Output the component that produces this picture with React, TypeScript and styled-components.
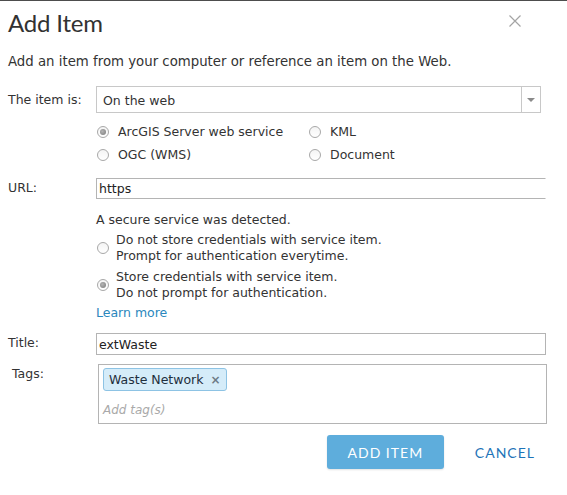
import styled, { createGlobalStyle } from 'styled-components';

const GlobalStyle = createGlobalStyle`
	html, body {
		margin: 0;
		padding: 0;
		background: #fff;
	}
`;

const Dialog = styled.div`
	width: 567px;
	height: 495px;
	box-sizing: border-box;
	border-top: 1px solid #4d4d4d;
	background: #fff;
	font-family: 'DejaVu Sans', Verdana, sans-serif;
	font-size: 12.5px;
	color: #333;
`;

const Header = styled.div`
	display: flex;
	justify-content: space-between;
	align-items: flex-start;
	padding: 7px 45px 0 8px;
`;

const Title = styled.h1`
	margin: 0;
	font-family: Lato, 'Open Sans', sans-serif;
	font-weight: 400;
	font-size: 24px;
	line-height: 30px;
	letter-spacing: -0.2px;
	color: #323232;
`;

const CloseButton = styled.button`
	border: none;
	background: none;
	padding: 0;
	margin-top: 6px;
	width: 14px;
	height: 14px;
	color: #a4a4a4;
	cursor: pointer;
	display: flex;
`;

const Intro = styled.p`
	margin: 16px 0 0 8px;
	font-size: 13.3px;
	line-height: 16px;
`;

const Form = styled.div`
	padding-left: 8px;
`;

type RowProps = {
	top: number;
};
const Row = styled.div<RowProps>`
	display: grid;
	grid-template-columns: 88px 1fr;
	margin-top: ${(props) => props.top}px;
`;

type LabelProps = {
	center?: boolean;
	indent?: number;
};
const Label = styled.label<LabelProps>`
	align-self: ${(props) => (props.center ? 'center' : 'start')};
	padding-left: ${(props) => props.indent || 0}px;
	padding-top: ${(props) => (props.center ? 0 : 2)}px;
	line-height: 16px;
`;

const SelectBox = styled.div`
	display: flex;
	width: 445px;
	height: 27px;
	box-sizing: border-box;
	border: 1px solid #c8c8c8;
`;

const SelectValue = styled.span`
	flex: 1;
	padding-left: 6px;
	line-height: 27px;
`;

const SelectArrow = styled.span`
	width: 18px;
	border-left: 1px solid #c8c8c8;
	display: flex;
	align-items: center;
	justify-content: center;
`;

const Arrow = styled.span`
	width: 0;
	height: 0;
	border-left: 4px solid transparent;
	border-right: 4px solid transparent;
	border-top: 4px solid #8a8a8a;
`;

const Content = styled.div`
	grid-column: 2;
`;

const RadioGrid = styled.div`
	display: grid;
	grid-template-columns: 212px 212px;
	grid-auto-rows: 23px;
	margin-top: 7px;
`;

type OptionProps = {
	gap: number;
};
const Option = styled.label<OptionProps>`
	display: flex;
	align-items: center;
	gap: ${(props) => props.gap}px;
	padding-left: 1px;
`;

type RadioProps = {
	checked?: boolean;
};
const Radio = styled.span<RadioProps>`
	position: relative;
	flex: none;
	width: 12px;
	height: 12px;
	box-sizing: border-box;
	border-radius: 50%;
	border: 1px solid #a8a8a8;
	background: linear-gradient(#f4f4f4, #fff);

	&::after {
		content: '';
		display: ${(props) => (props.checked ? 'block' : 'none')};
		position: absolute;
		top: 2px;
		left: 2px;
		width: 6px;
		height: 6px;
		border-radius: 50%;
		background: radial-gradient(circle at 40% 40%, #b4b4b4, #7a7a7a);
	}
`;

type InputProps = {
	h: number;
	w: number;
};
const TextInput = styled.div<InputProps>`
	width: ${(props) => props.w}px;
	height: ${(props) => props.h}px;
	box-sizing: border-box;
	border: 1px solid #b4b4b4;
	padding-left: 2px;
	line-height: ${(props) => props.h - 1}px;
	color: #222;
`;

const UrlInput = styled(TextInput)`
	border-right-color: transparent;
`;

type NoteProps = {
	top: number;
};
const Note = styled.div<NoteProps>`
	margin-top: ${(props) => props.top}px;
	line-height: 16px;
`;

const CredOption = styled.label<NoteProps>`
	display: flex;
	align-items: center;
	gap: 7px;
	margin-top: ${(props) => props.top}px;
	padding-left: 1px;
	line-height: 15.5px;
`;

const Link = styled.a`
	display: block;
	margin-top: 5px;
	line-height: 16px;
	color: #2a87bd;
	text-decoration: none;
`;

const TagsBox = styled.div`
	width: 449px;
	height: 60px;
	margin-left: 2px;
	box-sizing: border-box;
	border: 1px solid #b4b4b4;
	padding: 3px 4px;
`;

const Chip = styled.span`
	display: inline-flex;
	align-items: center;
	gap: 7px;
	height: 23px;
	box-sizing: border-box;
	padding: 0 5px 0 5px;
	border: 1px solid #8dc3e4;
	border-radius: 3px;
	background: #d5ecf9;
	color: #1f2f3d;
`;

const ChipRemove = styled.span`
	color: #6d7a85;
	font-size: 12px;
	font-weight: bold;
`;

const TagHint = styled.div`
	margin-top: 11px;
	line-height: 16px;
	color: #a9a9a9;
	font-style: italic;
	font-size: 12px;
`;

const Actions = styled.div`
	display: flex;
	justify-content: flex-end;
	align-items: center;
	gap: 31px;
	margin-top: 11px;
	padding-right: 32px;
`;

const PrimaryButton = styled.button`
	width: 117px;
	height: 34px;
	border: none;
	border-radius: 3px;
	background: #5eaddc;
	box-shadow: 0 1px 2px rgba(0, 0, 0, 0.12);
	color: #fff;
	font-family: Lato, 'Open Sans', sans-serif;
	font-size: 14px;
	letter-spacing: 1px;
	cursor: pointer;
`;

const TextButton = styled.button`
	border: none;
	background: none;
	padding: 0;
	color: #1e74b8;
	font-family: Lato, 'Open Sans', sans-serif;
	font-size: 14px;
	letter-spacing: 1px;
	cursor: pointer;
`;

function App() {
	return (
		<>
			<GlobalStyle />
			<Dialog>
				<Header>
					<Title>Add Item</Title>
					<CloseButton aria-label='Close'>
						<svg width='14' height='14' viewBox='0 0 14 14'>
							<path d='M1.5 1.5 L12.5 12.5 M12.5 1.5 L1.5 12.5' stroke='currentColor' strokeWidth='1.2' />
						</svg>
					</CloseButton>
				</Header>

				<Intro>Add an item from your computer or reference an item on the Web.</Intro>

				<Form>
					<Row top={16}>
						<Label center>The item is:</Label>
						<SelectBox>
							<SelectValue>On the web</SelectValue>
							<SelectArrow>
								<Arrow />
							</SelectArrow>
						</SelectBox>
						<Content>
							<RadioGrid>
								<Option gap={9}>
									<Radio checked />
									ArcGIS Server web service
								</Option>
								<Option gap={9}>
									<Radio />
									KML
								</Option>
								<Option gap={9}>
									<Radio />
									OGC (WMS)
								</Option>
								<Option gap={9}>
									<Radio />
									Document
								</Option>
							</RadioGrid>
						</Content>
					</Row>

					<Row top={12}>
						<Label>URL:</Label>
						<UrlInput w={450} h={21}>
							https
						</UrlInput>
						<Content>
							<Note top={13}>A secure service was detected.</Note>
							<CredOption top={4}>
								<Radio />
								<span>
									Do not store credentials with service item.
									<br />
									Prompt for authentication everytime.
								</span>
							</CredOption>
							<CredOption top={6}>
								<Radio checked />
								<span>
									Store credentials with service item.
									<br />
									Do not prompt for authentication.
								</span>
							</CredOption>
							<Link href='#'>Learn more</Link>
						</Content>
					</Row>

					<Row top={12}>
						<Label>Title:</Label>
						<TextInput w={450} h={22}>
							extWaste
						</TextInput>
					</Row>

					<Row top={9}>
						<Label indent={4}>Tags:</Label>
						<TagsBox>
							<Chip>
								Waste Network
								<ChipRemove>×</ChipRemove>
							</Chip>
							<TagHint>Add tag(s)</TagHint>
						</TagsBox>
					</Row>
				</Form>

				<Actions>
					<PrimaryButton>ADD ITEM</PrimaryButton>
					<TextButton>CANCEL</TextButton>
				</Actions>
			</Dialog>
		</>
	);
}

export default App;
